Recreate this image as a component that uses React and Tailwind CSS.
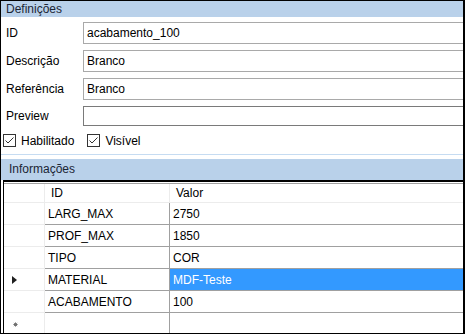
const fields = [
  { label: "ID", value: "acabamento_100" },
  { label: "Descrição", value: "Branco" },
  { label: "Referência", value: "Branco" },
];

const rows = [
  { id: "LARG_MAX", valor: "2750" },
  { id: "PROF_MAX", valor: "1850" },
  { id: "TIPO", valor: "COR" },
  { id: "MATERIAL", valor: "MDF-Teste", selected: true },
  { id: "ACABAMENTO", valor: "100" },
];

function CheckBox({ label }) {
  return (
    <div className="flex items-center">
      <div className="w-[13px] h-[13px] border border-[#333333] bg-white flex items-center justify-center">
        <svg width="11" height="11" viewBox="0 0 11 11">
          <path d="M1.5 5.5 L4 8 L9.5 2.5" fill="none" stroke="#333333" strokeWidth="1" />
        </svg>
      </div>
      <span className="ml-[5px]">{label}</span>
    </div>
  );
}

export default function App() {
  return (
    <div className="w-[465px] h-[334px] bg-white border-l border-t border-b border-r-2 border-black overflow-hidden text-[12px] text-black font-['Liberation_Sans',Arial,sans-serif]">
      {/* Definições */}
      <div className="h-[16px] bg-[#b9d1ea] pl-[5px] leading-[16px] text-[#1b2535]">Definições</div>

      <div className="flex flex-col gap-[6px] pt-[5px]">
        {fields.map((f) => (
          <div key={f.label} className="flex items-center">
            <div className="w-[82px] pl-[5px]">{f.label}</div>
            <div className="flex-1 h-[22px] border border-r-0 border-[#a9a9a9] flex items-center px-[3px]">
              {f.value}
            </div>
          </div>
        ))}
        <div className="flex items-center">
          <div className="w-[82px] pl-[5px]">Preview</div>
          <div className="flex-1 h-[20px] border border-r-0 border-[#7a7a7a]"></div>
        </div>
      </div>

      <div className="flex items-center gap-[13px] pl-[2px] mt-[8px] h-[13px]">
        <CheckBox label="Habilitado" />
        <CheckBox label="Visível" />
      </div>

      <div className="mt-[7px] h-[1px] bg-[#c6dcf2]"></div>

      {/* Informações */}
      <div className="mt-[4px] h-[21px] bg-[#b9d1ea] pl-[8px] leading-[20px] text-[#1b2535]">Informações</div>

      <div className="ml-[2px] border-l border-t-2 border-black pt-[1px]">
        {/* header */}
        <div className="flex h-[20px] border-t border-b border-t-[#a0a0a0] border-b-[#ececec]">
          <div className="w-[41px] border-r border-[#ececec]"></div>
          <div className="w-[125px] border-r border-[#ececec] pl-[6px] flex items-center">ID</div>
          <div className="flex-1 pl-[6px] flex items-center">Valor</div>
        </div>
        {rows.map((r) => (
          <div key={r.id} className="flex h-[22px]">
            <div className="w-[41px] border-r border-b border-[#ececec] flex items-center pl-[8px]">
              {r.selected && (
                <svg width="5" height="8" viewBox="0 0 5 8">
                  <path d="M0 0 L5 4 L0 8 Z" fill="#202020" />
                </svg>
              )}
            </div>
            <div className="w-[125px] border-r border-b border-[#a0a0a0] pl-[3px] flex items-center">{r.id}</div>
            <div
              className={
                r.selected
                  ? "flex-1 border-b border-[#a0a0a0] pl-[3px] flex items-center bg-[#3399ff] text-white"
                  : "flex-1 border-b border-[#a0a0a0] pl-[3px] flex items-center"
              }
            >
              {r.valor}
            </div>
          </div>
        ))}
        <div className="flex h-[22px]">
          <div className="w-[41px] border-r border-[#ececec] flex items-center pl-[9px]">
            <svg width="5" height="5" viewBox="0 0 5 5">
              <circle cx="2.5" cy="2.5" r="1.6" fill="#555555" />
              <path d="M2.5 0 V5 M0 2.5 H5 M0.8 0.8 L4.2 4.2 M4.2 0.8 L0.8 4.2" stroke="#777777" strokeWidth="0.6" />
            </svg>
          </div>
          <div className="w-[125px] border-r border-[#a0a0a0]"></div>
          <div className="flex-1"></div>
        </div>
      </div>
    </div>
  );
}
